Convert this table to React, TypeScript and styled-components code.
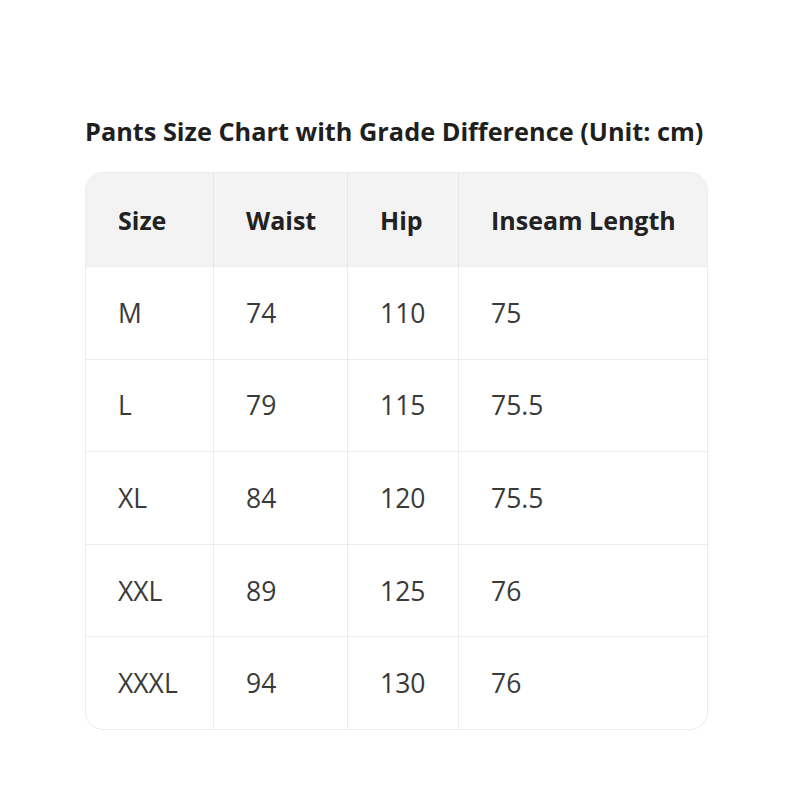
import React from "react";
import styled, { createGlobalStyle } from "styled-components";

const GlobalStyle = createGlobalStyle`
  body {
    margin: 0;
    background: #ffffff;
    font-family: "Open Sans", "Noto Sans", sans-serif;
  }
`;

const Page = styled.div`
  padding: 113px 0 0 85px;
  width: 623px;
`;

const Title = styled.h2`
  margin: 0 0 23px 0;
  font-size: 25.3px;
  font-weight: 700;
  line-height: 36px;
  color: #1f1f1f;
  white-space: nowrap;
`;

const TableWrap = styled.div`
  border: 1px solid #ececec;
  border-radius: 18px;
  overflow: hidden;
`;

const Table = styled.table`
  width: 100%;
  border-collapse: collapse;
  table-layout: fixed;
`;

const HeadCell = styled.th<{ w: number }>`
  width: ${({ w }) => w - 32}px;
  height: 93px;
  padding: 0 0 0 32px;
  background: #f3f3f3;
  text-align: left;
  font-size: 25px;
  font-weight: 700;
  color: #222222;
  white-space: nowrap;
  border-right: 1px solid #e6e6e6;
  &:last-child {
    border-right: none;
  }
`;

const Row = styled.tr`
  border-top: 1px solid #ececec;
`;

const Cell = styled.td`
  height: 91.6px;
  padding: 0 0 0 32px;
  font-size: 26.5px;
  color: #3a3a3a;
  border-right: 1px solid #ececec;
  &:last-child {
    border-right: none;
  }
`;

const columns = [
  { label: "Size", w: 127 },
  { label: "Waist", w: 133 },
  { label: "Hip", w: 110 },
  { label: "Inseam Length", w: 253 },
];

const rows = [
  ["M", "74", "110", "75"],
  ["L", "79", "115", "75.5"],
  ["XL", "84", "120", "75.5"],
  ["XXL", "89", "125", "76"],
  ["XXXL", "94", "130", "76"],
];

const App: React.FC = () => {
  return (
    <Page>
      <GlobalStyle />
      <Title>Pants Size Chart with Grade Difference (Unit: cm)</Title>
      <TableWrap>
        <Table>
          <thead>
            <tr>
              {columns.map((col) => (
                <HeadCell key={col.label} w={col.w}>
                  {col.label}
                </HeadCell>
              ))}
            </tr>
          </thead>
          <tbody>
            {rows.map((row, i) => (
              <Row key={i}>
                {row.map((val, j) => (
                  <Cell key={j}>{val}</Cell>
                ))}
              </Row>
            ))}
          </tbody>
        </Table>
      </TableWrap>
    </Page>
  );
};

export default App;
